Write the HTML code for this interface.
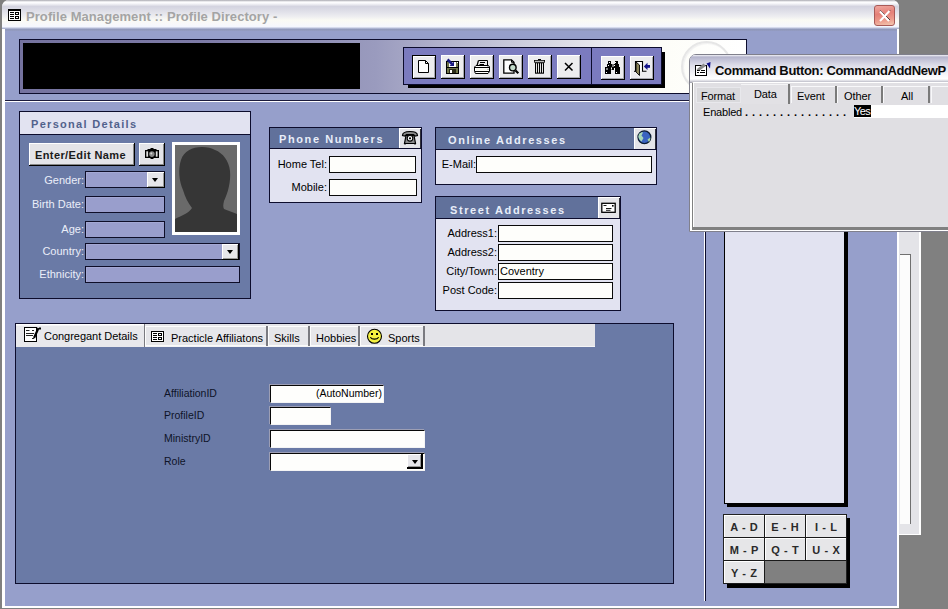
<!DOCTYPE html>
<html><head><meta charset="utf-8">
<style>
*{margin:0;padding:0;box-sizing:border-box}
html,body{width:948px;height:609px;overflow:hidden;background:#808080;font-family:"Liberation Sans",sans-serif;font-size:11px;color:#000}
.a{position:absolute}
.t{position:absolute;white-space:nowrap;line-height:13px}
.k{letter-spacing:-0.25px}
.r{text-align:right}
.box{border:1px solid #0c0c2c}
.tb{position:absolute;width:24px;height:24px;background:#ececee;border-right:1px solid #000;border-bottom:1px solid #000;box-shadow:inset 1px 1px #fff,inset -1px -1px #a8a8b0}
.tb svg{position:absolute;left:0;top:0}
.pf{position:absolute;background:#999ecc;border:1px solid #0e0e28;box-shadow:inset 1px 1px #a4a8d4}
.wf{position:absolute;background:#fefefb;border:1px solid #0a0a0a}
.hdr{position:absolute;background:#61719b;border-bottom:1px solid #0c0c2c;color:#e8eef9;font-weight:bold;letter-spacing:1.6px;line-height:23px;padding-left:9px}
.ib{position:absolute;background:#e4e4e8;box-shadow:inset 1px 1px #fff,inset -1px -1px #888}
.lb{color:#eaeef9}
.ddb{position:absolute;background:#e6e6ea;border-right:1px solid #000;border-bottom:1px solid #000;box-shadow:inset 1px 1px #fff,inset -1px -1px #999}
.ddb:after{content:"";position:absolute;left:4.5px;top:6px;border-left:3.5px solid transparent;border-right:3.5px solid transparent;border-top:4px solid #000}
.tab{position:absolute;top:326px;height:20px;background:#e6e6ea;border-right:2px solid #7a7a80;box-shadow:inset 1px 1px #fdfdfd,inset 0 -1px #fafafa;line-height:13px}
.sf{position:absolute;background:#fefefc;border-top:1px solid #080808;border-left:1px solid #080808;border-right:1px solid #f4f4f4;border-bottom:1px solid #f4f4f4;box-shadow:-1px -1px 0 #9c9eb4}
.lg{position:absolute;width:41px;height:23px;background:#e6e6e8;border-right:1px solid #1a1a1a;border-bottom:1px solid #1a1a1a;box-shadow:inset 1px 1px #fff;font-weight:bold;font-size:11px;letter-spacing:0.6px;word-spacing:0;text-align:center;line-height:25px;text-indent:0.6px;color:#2a2a2a}
.pt{position:absolute;top:85px;height:19px;background:#e4e3e7;border-right:1px solid #8a8a8a;box-shadow:inset 1px 1px #fff;line-height:18px;text-align:center}
</style></head><body>
<!-- window frame -->
<div class="a" style="left:2px;top:0;width:897px;height:608px;background:#fff;border-radius:7px 7px 0 0"></div>
<div class="a" style="left:2px;top:0px;width:897px;height:29px;border-radius:7px 7px 0 0;background:linear-gradient(#a8a8b0 0px,#fdfdff 2px,#fbfbfd 3px,#d4d4e0 6.5px,#dcdce6 10px,#ececf0 16px,#fafaf4 20px,#f8f8fa 24px,#f4f6fe 26.5px,#c0c6e0 28.2px,#8f97b9 29px)"></div>
<div class="a" style="left:5px;top:29px;width:892px;height:577px;background:#969fcb"></div>
<div class="a" style="left:5px;top:29px;width:892px;height:2px;background:linear-gradient(#8f97b9,#949cc2)"></div>
<!-- title -->
<svg class="a" style="left:8px;top:9px" width="13" height="12"><rect x="0.5" y="0.5" width="12" height="11" fill="#fff" stroke="#000"/><rect x="0" y="0" width="13" height="2" fill="#000"/><path d="M2 3.5H6M2 5.5H6M2 7.5H6M2 9.5H6" stroke="#000"/><rect x="7.5" y="3.5" width="3" height="2" fill="none" stroke="#000"/><rect x="7.5" y="7.5" width="3" height="2" fill="none" stroke="#000"/></svg>
<div class="t" style="left:26px;top:8.5px;font-size:13px;font-weight:bold;color:#a4a4a4;line-height:15px;letter-spacing:0.07px">Profile Management :: Profile Directory -</div>
<div class="a" style="left:874px;top:5px;width:21px;height:21px;border-radius:3px;background:linear-gradient(170deg,#f0a8a0,#e48078 40%,#ec9a8c 70%,#f4c8b0);border:1px solid #a85a58"></div>
<svg class="a" style="left:874px;top:5px" width="21" height="21"><path d="M6.5 5.5L16 15M16 5.5L6.5 15" stroke="#302020" stroke-width="1"/><path d="M6 6.5L15 16M15.5 6L6 16" stroke="#fff" stroke-width="2"/></svg>
<!-- header band -->
<div class="a box" style="left:19px;top:39px;width:728px;height:55px;background:linear-gradient(90deg,#75739f 0%,#7d7ba7 25%,#9a9bbe 49%,#e8e8ee 80%,#fdfdf8 88%,#fff 100%)"></div>
<div class="a" style="left:23px;top:43px;width:337px;height:46px;background:#000"></div>
<!-- watermark circle -->
<div class="a" style="left:681px;top:41px;width:51px;height:51px;border-radius:50%;border:2px solid #e6e6e6;box-shadow:inset 1px 1px 1px #f0f0f0"></div>
<!-- toolbar -->
<div class="a" style="left:408px;top:52px;width:257px;height:36px;background:#000"></div>
<div class="a box" style="left:403px;top:47px;width:259px;height:38px;background:#7b7bbf"></div>
<div class="a" style="left:591px;top:48px;width:1px;height:36px;background:#0c0c2c"></div>
<div class="tb" style="left:412px;top:55px;border:1px solid #000"><svg width="24" height="24" style="left:-1px;top:-1px"><path d="M6.5 5.5H13.5L16.5 8.5V17.5H6.5Z" fill="#fff" stroke="#000"/><path d="M13.5 5.5V8.5H16.5" fill="none" stroke="#000"/></svg></div>
<div class="tb" style="left:441px;top:55px"><svg width="24" height="24"><rect x="5.5" y="6.5" width="12" height="12" fill="#6f7448" stroke="#000"/><rect x="8" y="7" width="7" height="5" fill="#fff"/><path d="M6 12.5H17" stroke="#000"/><rect x="8" y="14" width="7" height="4" fill="#2a2a18"/><rect x="9" y="15" width="2" height="3" fill="#fff"/><rect x="16" y="7" width="1" height="1" fill="#fff"/><path d="M6.5 4.5L11 9" stroke="#1a1a80" stroke-width="2.6"/><path d="M8.5 11H13V6.5Z" fill="#1a1a80"/></svg></div>
<div class="tb" style="left:470px;top:55px"><svg width="24" height="24"><path d="M8.5 5.5H17.5V10.5" fill="none" stroke="#000"/><path d="M8.5 5.5L7 10.5" fill="none" stroke="#000" stroke-width="1.2"/><path d="M10 7.5H15M9.5 9.5H14" stroke="#000"/><path d="M6 10.5H18.5L19.5 12V16.5L18 18.5H5.5L4.5 16.5V12Z" fill="#fff" stroke="#000"/><path d="M5 12.5H19M5 16.5H19" stroke="#000"/><path d="M6 13.5H18V15.5H6Z" fill="#f8f8f0"/><path d="M17.5 11L18.5 12M17.5 14L18.5 15" stroke="#888"/></svg></div>
<div class="tb" style="left:499px;top:55px"><svg width="24" height="24"><path d="M4.8 4.8H12.5L15 7.3V18.2H4.8Z" fill="#fff" stroke="#000" stroke-width="1.3"/><path d="M12.5 4.8V7.3H15" fill="none" stroke="#000"/><circle cx="13.8" cy="12.6" r="3.3" fill="#c4dccc" stroke="#000" stroke-width="1.4"/><path d="M16.5 15.5L19.3 18.3" stroke="#000" stroke-width="2.2"/></svg></div>
<div class="tb" style="left:528px;top:55px"><svg width="24" height="24"><path d="M10 4H13V5H10Z" fill="#000"/><rect x="6" y="5" width="11" height="2.6" fill="#000"/><path d="M6.8 6.3H16.2" stroke="#fff" stroke-width="0.9"/><path d="M7 7.5H16V18.7H7Z" fill="#000"/><path d="M8.5 8.3V17.6M10.5 8.3V17.6M12.5 8.3V17.6M14.5 8.3V17.6" stroke="#fff" stroke-width="0.9"/></svg></div>
<div class="tb" style="left:557px;top:55px"><svg width="24" height="24"><path d="M8 8L15.5 15.5M15.5 8L8 15.5" stroke="#000" stroke-width="1.5"/></svg></div>
<div class="tb" style="left:601px;top:56px"><svg width="24" height="24"><path d="M7 5H10V8H11.5V11H12.5V8H14V5H17V8H18V11H19V18H14V14H10V18H4V11H6V8H7Z" fill="#000"/><path d="M8 6H9V7H8ZM14 6H15V7H14ZM7 9H8V10H7ZM13 9H14V10H13ZM5.5 12H6.5V14H5.5ZM10 11.5H11V13.5H10ZM13 12H14V14H13ZM5 16H6V17H5ZM15 16H16V17H15Z" fill="#fff"/></svg></div>
<div class="tb" style="left:630px;top:56px"><svg width="24" height="24"><path d="M5.5 15.3V5.5H12.5V15.3H16.5" fill="#fff" stroke="#000" stroke-width="1.1"/><path d="M4 15.3H6" stroke="#000"/><path d="M6 6L9.5 9V19.5L6 16Z" fill="#8a8458" stroke="#000" stroke-width="0.9"/><path d="M13.8 10.4L17.5 6.8V14Z" fill="#14148a"/><path d="M16 10.4H20" stroke="#14148a" stroke-width="2.8"/></svg></div>

<!-- separator -->
<div class="a" style="left:5px;top:100px;width:686px;height:1px;background:#1a1a3a"></div>
<div class="a" style="left:5px;top:101px;width:686px;height:1px;background:#fff"></div>

<!-- personal details -->
<div class="a box" style="left:19px;top:111px;width:232px;height:188px;background:#6a7aa6"></div>
<div class="a" style="left:20px;top:112px;width:230px;height:23px;background:#e2e3f1;border-bottom:1px solid #0c0c2c"></div>
<div class="t" style="left:31px;top:118px;font-weight:bold;color:#52628c;letter-spacing:1.3px">Personal Details</div>
<div class="ib" style="left:29px;top:143px;width:106px;height:23px;border-right:1px solid #000;border-bottom:1px solid #000"></div>
<div class="t" style="left:35px;top:149px;font-weight:bold;color:#1a1a1a;letter-spacing:0.4px">Enter/Edit Name</div>
<div class="ib" style="left:139px;top:143px;width:26px;height:23px;border-right:1px solid #000;border-bottom:1px solid #000"></div>
<svg class="a" style="left:138px;top:141px" width="28" height="26"><path d="M7 9H9.5V8H12.5V7H15.5V8H18.5V9H21V17H15.5V18H12.5V17H7Z" fill="#000"/><rect x="8.3" y="10.3" width="1.8" height="5.4" fill="#e0e0e0"/><rect x="17.8" y="10.3" width="1.8" height="5.4" fill="#e0e0e0"/><circle cx="13.9" cy="13.1" r="2.8" fill="#8a8a8a"/><circle cx="13.3" cy="12.5" r="1" fill="#d8d8d8"/></svg>
<div class="a" style="left:172px;top:142px;width:68px;height:93px;background:#fff"></div>
<div class="a" style="left:175px;top:145px;width:62px;height:87px;background:#6a6a6a;overflow:hidden"><svg width="62" height="87"><path d="M0 74C6 71 14 68 17 63C13 58 10 52 8 45C4 36 3 24 6 15C9 6 17 2 27 2C32 2 37 3 40 5C48 8 54 16 55 26C56 36 53 48 49 56C48 60 48 62 49 64C53 66 58 67 62 69V87H0Z" fill="#363636"/></svg></div>
<div class="t r lb" style="left:20px;top:174px;width:64px">Gender:</div>
<div class="pf" style="left:85px;top:171px;width:80px;height:17px"></div>
<div class="ddb" style="left:147px;top:172px;width:18px;height:16px"></div>
<div class="t r lb" style="left:20px;top:198px;width:64px">Birth Date:</div>
<div class="pf" style="left:85px;top:196px;width:80px;height:17px"></div>
<div class="t r lb" style="left:20px;top:223px;width:64px">Age:</div>
<div class="pf" style="left:85px;top:221px;width:80px;height:17px"></div>
<div class="t r lb" style="left:20px;top:245px;width:64px">Country:</div>
<div class="pf" style="left:85px;top:243px;width:155px;height:17px"></div>
<div class="ddb" style="left:222px;top:244px;width:17px;height:16px"></div>
<div class="t r lb" style="left:20px;top:268px;width:64px">Ethnicity:</div>
<div class="pf" style="left:85px;top:266px;width:155px;height:17px"></div>

<!-- phone -->
<div class="a box" style="left:269px;top:127px;width:153px;height:76px;background:#e2e3f1"></div>
<div class="hdr" style="left:270px;top:128px;width:151px;height:21px">Phone Numbers</div>
<div class="ib" style="left:399px;top:128px;width:22px;height:20px;box-shadow:inset 1px 1px #fff,inset -1px 0 #303038"></div>
<svg class="a" style="left:398px;top:126px" width="24" height="24"><path d="M4.5 9.5C4.5 6 8 5.5 12 5.5C16 5.5 19.5 6 19.5 9.5L17 10L15.5 8.5H8.5L7 10Z" fill="#8a8a8a" stroke="#000" stroke-width="1.2"/><path d="M8 9.5H16L17.5 17.5H6.5Z" fill="#8a8a8a" stroke="#000" stroke-width="1.2"/><path d="M7 17.5V18.5M17 17.5V18.5" stroke="#000" stroke-width="1.5"/><circle cx="12" cy="12.3" r="2.8" fill="#fff" stroke="#000" stroke-width="1.1"/><circle cx="12" cy="12.3" r="1.1" fill="#000"/></svg>
<div class="t r" style="left:270px;top:158px;width:57px">Home Tel:</div>
<div class="wf" style="left:329px;top:156px;width:87px;height:17px"></div>
<div class="t r" style="left:270px;top:181px;width:57px">Mobile:</div>
<div class="wf" style="left:329px;top:179px;width:88px;height:17px"></div>

<!-- online -->
<div class="a box" style="left:435px;top:127px;width:222px;height:58px;background:#e2e3f1"></div>
<div class="hdr" style="left:436px;top:128px;width:220px;height:22px;padding-left:12px;line-height:25px">Online Addresses</div>
<div class="ib" style="left:634px;top:128px;width:22px;height:21px;box-shadow:inset 1px 1px #fff,inset -1px 0 #303038"></div>
<svg class="a" style="left:632px;top:126px" width="26" height="26"><circle cx="12.4" cy="11.3" r="6.4" fill="#3a64c0" stroke="#0a1a30" stroke-width="1.3"/><path d="M7 8C8.5 6.5 10 6 11 6.5L9.5 9.5L11.5 12L9.5 15.5C8 14.5 6.5 12.5 6.3 10.5Z" fill="#a8d8b8"/><path d="M18.3 11.5L15.5 13.5L17 16C18 15 18.5 13 18.3 11.5Z" fill="#a8d8a0"/></svg>
<div class="t r" style="left:436px;top:158px;width:40px">E-Mail:</div>
<div class="wf" style="left:476px;top:156px;width:176px;height:17px"></div>

<!-- street -->
<div class="a box" style="left:435px;top:196px;width:186px;height:115px;background:#e2e3f1"></div>
<div class="hdr" style="left:436px;top:197px;width:184px;height:22px;padding-left:14px;line-height:26px">Street Addresses</div>
<div class="ib" style="left:598px;top:197px;width:22px;height:21px;box-shadow:inset 1px 1px #fff,inset -1px 0 #303038"></div>
<svg class="a" style="left:596px;top:195px" width="26" height="26"><rect x="5.8" y="8.3" width="13.4" height="9" fill="#fff" stroke="#000" stroke-width="1.3"/><path d="M7.5 10.5H10.5M10 13.5H15.5M10 15.3H14.5" stroke="#000" stroke-width="0.9"/><rect x="16" y="10" width="1.6" height="1.6" fill="#000"/></svg>
<div class="t r" style="left:436px;top:227px;width:61px">Address1:</div>
<div class="wf" style="left:498px;top:225px;width:115px;height:17px"></div>
<div class="t r" style="left:436px;top:246px;width:61px">Address2:</div>
<div class="wf" style="left:498px;top:244px;width:115px;height:17px"></div>
<div class="t r" style="left:436px;top:265px;width:61px">City/Town:</div>
<div class="wf" style="left:498px;top:263px;width:115px;height:17px"></div>
<div class="t" style="left:500px;top:265px">Coventry</div>
<div class="t r" style="left:436px;top:284px;width:61px">Post Code:</div>
<div class="wf" style="left:498px;top:282px;width:115px;height:17px"></div>

<!-- tab control -->
<div class="a box" style="left:15px;top:323px;width:659px;height:261px;background:#6a7aa6"></div>
<div class="a" style="left:16px;top:324px;width:579px;height:23px;background:#e4e4e8;border-bottom:1px solid #f4f4f6"></div>
<div class="a" style="left:16px;top:324px;width:129px;height:23px;background:#e8e8ec;border-right:1px solid #7a7a80;box-shadow:inset 0 1px #fff,inset 0 2px #f4f4f6"></div>
<svg class="a" style="left:24px;top:327px" width="17" height="15"><rect x="0.5" y="0.5" width="12" height="14" fill="#fff" stroke="#000"/><path d="M2 3.5H5.5M8 3.5H10M2 6.5H10M2 8.5H9M8 11.5H10" stroke="#222"/><path d="M14.5 1L10 11" stroke="#000" stroke-width="2.2"/><path d="M15 0.5H17V2.5H15Z" fill="#000"/></svg>
<div class="t" style="left:44px;top:330px;letter-spacing:-0.03px">Congregant Details</div>
<div class="tab" style="left:145px;width:123px"></div>
<svg class="a" style="left:151px;top:331px" width="13" height="11"><rect x="0.5" y="0.5" width="12" height="10" fill="#fff" stroke="#000"/><path d="M2 2.5H6M2 4.5H6M2 6.5H6M2 8.5H6" stroke="#000"/><rect x="7.5" y="2.5" width="3" height="2" fill="none" stroke="#000"/><rect x="7.5" y="6.5" width="3" height="2" fill="none" stroke="#000"/></svg>
<div class="t" style="left:171px;top:332px">Practicle Affiliatons</div>
<div class="tab" style="left:268px;width:42px"></div>
<div class="t" style="left:274px;top:332px">Skills</div>
<div class="tab" style="left:310px;width:50px"></div>
<div class="t" style="left:316px;top:332px">Hobbies</div>
<div class="tab" style="left:360px;width:65px"></div>
<svg class="a" style="left:366px;top:328px" width="17" height="17"><circle cx="8.5" cy="8.3" r="7" fill="#f4f040" stroke="#000" stroke-width="1.1"/><rect x="5" y="5" width="2" height="2" fill="#000"/><rect x="10" y="5" width="2" height="2" fill="#000"/><path d="M4.3 9.2C6 11.8 11 11.8 12.7 9.2" stroke="#000" stroke-width="1.1" fill="none"/></svg>
<div class="t" style="left:388px;top:332px">Sports</div>

<div class="t" style="left:164px;top:387px;color:#0e1428;font-size:10.5px">AffiliationID</div>
<div class="sf" style="left:270px;top:385px;width:114px;height:18px"></div>
<div class="t" style="left:316px;top:387px;font-size:10.5px">(AutoNumber)</div>
<div class="t" style="left:164px;top:409px;color:#0e1428;font-size:10.5px">ProfileID</div>
<div class="sf" style="left:270px;top:407px;width:61px;height:18px"></div>
<div class="t" style="left:164px;top:432px;color:#0e1428;font-size:10.5px">MinistryID</div>
<div class="sf" style="left:270px;top:430px;width:155px;height:18px"></div>
<div class="t" style="left:164px;top:455px;color:#0e1428;font-size:10.5px">Role</div>
<div class="sf" style="left:270px;top:453px;width:155px;height:18px"></div>
<div class="ddb" style="left:407px;top:454px;width:16px;height:15px;border-right-width:2px;border-bottom-width:2px"></div>

<!-- right side -->
<div class="a" style="left:704px;top:231px;width:1px;height:370px;background:#fff"></div>
<div class="a" style="left:705px;top:231px;width:1px;height:370px;background:#0c0c2c"></div>
<div class="a" style="left:727px;top:231px;width:121px;height:276px;background:#000"></div>
<div class="a" style="left:724px;top:225px;width:121px;height:279px;background:#e2e3f1;border:1px solid #000;border-top:0"></div>
<div class="a" style="left:727px;top:518px;width:123px;height:70px;background:#000"></div>
<div class="a" style="left:723px;top:514px;width:124px;height:70px;background:#808080;border:1px solid #222"></div>
<div class="lg" style="left:724px;top:515px">A - D</div>
<div class="lg" style="left:765px;top:515px">E - H</div>
<div class="lg" style="left:806px;top:515px">I - L</div>
<div class="lg" style="left:724px;top:538px">M - P</div>
<div class="lg" style="left:765px;top:538px">Q - T</div>
<div class="lg" style="left:806px;top:538px">U - X</div>
<div class="lg" style="left:724px;top:561px">Y - Z</div>
<!-- right panel behind -->
<div class="a" style="left:897px;top:231px;width:24px;height:304px;background:#e4e4e8;border-left:2px solid #fff;border-right:2px solid #fff;border-bottom:1px solid #fff"></div>
<div class="a" style="left:900px;top:254px;width:11px;height:270px;background:#fcfcfc;border-top:1px solid #707070;border-right:1px solid #707070"></div>

<!-- property sheet -->
<div class="a" style="left:689px;top:54px;width:270px;height:178px;background:#fff;border:1px solid #80808c;border-radius:7px 7px 0 0"></div>
<div class="a" style="left:690px;top:55px;width:270px;height:28px;border-radius:5px 5px 0 0;background:linear-gradient(#f4f4f8 0,#b4b4cc 2px,#c4c4d8 5px,#dcdce8 10px,#ececf2 16px,#fafafc 21px,#ffffff 24px,#d8d8e0 26px,#9a9aa8 28px)"></div>
<svg class="a" style="left:695px;top:62px" width="17" height="15"><rect x="0.5" y="3.5" width="11" height="10" fill="#fff" stroke="#000"/><path d="M2 8.5H5M6 8.5H10M2 10.5H4M5 10.5H10" stroke="#000"/><path d="M1.5 7.5L8.5 1.5L11 4L4.5 8.5Z" fill="#8a8a8a"/><path d="M11.5 1.5L15.5 0L15 6.5Z" fill="#10108a"/></svg>
<div class="t" style="left:715px;top:63px;font-size:13px;font-weight:bold;letter-spacing:-0.35px;line-height:15px;color:#0a0a0a">Command Button: CommandAddNewP</div>
<div class="a" style="left:692px;top:82px;width:260px;height:146px;background:#e0dfe3;border-left:1px solid #808080;border-top:1px solid #fff;box-shadow:inset 1px 0 #fff"></div>
<div class="a" style="left:692px;top:227px;width:260px;height:3px;background:#808080"></div>
<div class="a" style="left:696px;top:87px;width:45px;height:16px;background:#d9d9dc;box-shadow:inset 0 0 0 1px #e8e8ec"></div>
<div class="t" style="left:701px;top:90px;letter-spacing:-0.15px">Format</div>
<div class="a" style="left:741px;top:84px;width:49px;height:20px;background:#e2e1e5;border-right:2px solid #7a7a7a;box-shadow:inset 0 1px #f4f4f6"></div>
<div class="t" style="left:754px;top:88px;letter-spacing:-0.15px">Data</div>
<div class="a" style="left:791px;top:86px;width:46px;height:17px;background:#e0dfe3;border-right:2px solid #7a7a7a;box-shadow:inset 1px 1px #f8f8fa"></div>
<div class="t" style="left:797px;top:90px;letter-spacing:-0.1px">Event</div>
<div class="a" style="left:837px;top:86px;width:46px;height:17px;background:#e0dfe3;border-right:2px solid #7a7a7a;box-shadow:inset 1px 1px #f8f8fa"></div>
<div class="t" style="left:844px;top:90px;letter-spacing:-0.1px">Other</div>
<div class="a" style="left:883px;top:86px;width:47px;height:17px;background:#e0dfe3;border-right:2px solid #7a7a7a;box-shadow:inset 1px 1px #f8f8fa"></div>
<div class="t" style="left:901px;top:90px">All</div>
<div class="a" style="left:931px;top:86px;width:20px;height:17px;box-shadow:inset 1px 1px #f8f8fa"></div>
<div class="t" style="left:703px;top:106px;letter-spacing:-0.2px">Enabled</div><div class="t" style="left:745px;top:106px;letter-spacing:3.94px;font-weight:bold">...............</div>
<div class="a" style="left:854px;top:105px;width:94px;height:13px;background:#fff"></div>
<div class="t" style="left:854px;top:105px;width:17px;height:12px;background:#000;color:#fff;letter-spacing:-0.6px;line-height:13px;overflow:hidden">Yes</div>
</body></html>
